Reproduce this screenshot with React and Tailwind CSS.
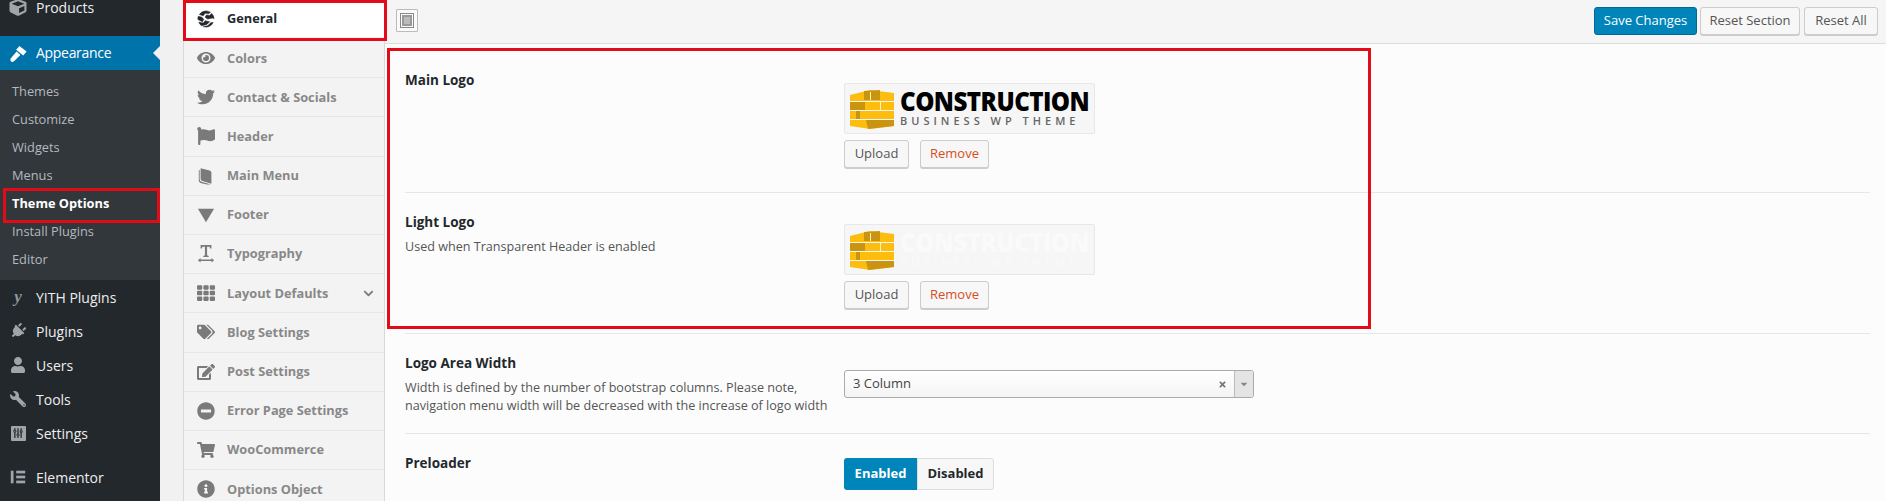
import { FaChevronDown, FaCube, FaEdit, FaEye, FaFlag, FaInfoCircle, FaMinusCircle, FaPlug, FaShoppingCart, FaTags, FaTh, FaTimes, FaTwitter, FaUser, FaWrench, FaCaretDown } from 'react-icons/fa'
import { FaSliders } from 'react-icons/fa6'

const FONT = 'font-["Open_Sans","Noto_Sans",sans-serif]'

function ElementorIcon({ className }) {
  return (
    <svg viewBox="0 0 20 20" className={className} fill="currentColor">
      <rect x="2" y="3" width="3" height="14" />
      <rect x="8" y="3" width="10" height="3" />
      <rect x="8" y="8.5" width="10" height="3" />
      <rect x="8" y="14" width="10" height="3" />
    </svg>
  )
}

function BrushIcon({ className }) {
  return (
    <svg viewBox="0 0 20 20" className={className} fill="currentColor">
      <path d="M11 2 L18.5 8 L15 12 L7.5 6 Z" />
      <path d="M8 8 L12 11.5 L5 18.5 Q3 19.5 1.8 18 Q1 16.5 2 15 Z" />
    </svg>
  )
}

function GlobeIcon({ className }) {
  return (
    <svg viewBox="0 0 20 20" className={className} fill="currentColor" stroke="currentColor" strokeWidth="0.6">
      <path d="M10 1 A9 9 0 0 0 2.6 5 L7 6.5 L9 3.5 L13 4 L15 2.6 A9 9 0 0 0 10 1 Z" />
      <path d="M16.3 3.8 L14 6 L10.5 5.5 L9 8 L12 10 L17 9 L19 9.5 A9 9 0 0 0 16.3 3.8 Z" />
      <path d="M1.4 7 A9 9 0 0 0 1 10.5 L6 13 L7.5 10.5 L5.5 8 Z" />
      <path d="M2 13.5 A9 9 0 0 0 5 17.5 L11 16 L14 13 L9 12 L7 14.5 Z" />
      <path d="M7 18.5 A9 9 0 0 0 18 14 L15.5 14 L12 17.5 Z" />
    </svg>
  )
}

function BookIcon({ className }) {
  return (
    <svg viewBox="0 0 20 20" className={className} fill="currentColor">
      <path d="M4 1.5 L14 4 Q16 4.5 16 6.5 V18.5 L6 15.5 Q4 15 4 13 Z" />
      <path d="M3 3 V14 Q3 16 5 16.5 L15.5 19.5 H11 L4 17.8 Q2 17 2 15 V4 Z" />
    </svg>
  )
}

function TriangleIcon({ className }) {
  return (
    <svg viewBox="0 0 20 20" className={className} fill="currentColor">
      <path d="M1 3 H19 L10 18 Z" />
    </svg>
  )
}

function TypographyIcon({ className }) {
  return (
    <svg viewBox="0 0 20 20" className={className} fill="currentColor">
      <path d="M4 0 H16 V4 H14.5 L14 2 H11.2 V11.5 L13 12.2 V13.2 H7 V12.2 L8.8 11.5 V2 H6 L5.5 4 H4 Z" />
      <path d="M1 17 L4 14.5 V16.2 H16 V14.5 L19 17 L16 19.5 V17.8 H4 V19.5 Z" />
    </svg>
  )
}

function Bricks() {
  return (
    <svg viewBox="0 0 44 40" className="w-[44px] h-[40px] shrink-0">
      <path d="M0 6 L20 1 L44 4 V12 H0 Z" fill="#fdbd0e" />
      <path d="M14 2 L30 1 V11 H14 Z" fill="#c9940f" />
      <path d="M0 13 H44 V21 H0 Z" fill="#fdbd0e" />
      <path d="M0 13 H15 V21 H0 Z" fill="#c9940f" />
      <path d="M30 13 H31 V21 H30 Z M20 3 H21 V11 H20 Z" fill="#fff3c9" />
      <path d="M0 22 H44 V30 H0 Z" fill="#fdbd0e" />
      <path d="M6 22 H10 V30 H6 Z" fill="#c9940f" />
      <path d="M0 31 H44 V37 L20 40 L0 37 Z" fill="#fdbd0e" />
      <path d="M16 31 H44 V37 L18 40 Z" fill="#c9940f" />
    </svg>
  )
}

function LogoPreview({ light }) {
  return (
    <div className="w-[251px] h-[51px] bg-[#f6f6f6] border border-[#e8e8e8] rounded-[2px] flex items-center gap-[6px] pl-[5px] overflow-hidden">
      <Bricks />
      <div className="flex flex-col -mt-[2px] font-['Open_Sans',sans-serif]">
        <span className={`text-[26px] leading-[26px] font-extrabold tracking-[-0.6px] scale-x-[0.93] origin-left ${light ? 'text-[#fafafa]' : 'text-black'}`}>CONSTRUCTION</span>
        <span className={`text-[11px] leading-[13px] font-semibold tracking-[4px] ${light ? 'text-[#f9f9f9]' : 'text-[#666]'}`}>BUSINESS WP THEME</span>
      </div>
    </div>
  )
}

function WpButton({ children, className = '' }) {
  return (
    <button className={`h-[28px] bg-[#f7f7f7] border border-[#cccccc] rounded-[3px] shadow-[0_1px_0_#cccccc] text-[13px] ${className}`}>
      {children}
    </button>
  )
}

const wpMain = [
  { label: 'YITH Plugins', glyph: true },
  { label: 'Plugins', icon: FaPlug, rotate: 'rotate-45' },
  { label: 'Users', icon: FaUser },
  { label: 'Tools', icon: FaWrench, rotate: '-rotate-90' },
]

const subItems = ['Themes', 'Customize', 'Widgets', 'Menus', 'Theme Options', 'Install Plugins', 'Editor']

const panelItems = [
  { label: 'Colors', icon: FaEye },
  { label: 'Contact & Socials', icon: FaTwitter },
  { label: 'Header', icon: FaFlag },
  { label: 'Main Menu', icon: BookIcon },
  { label: 'Footer', icon: TriangleIcon },
  { label: 'Typography', icon: TypographyIcon },
  { label: 'Layout Defaults', icon: FaTh, more: true },
  { label: 'Blog Settings', icon: FaTags },
  { label: 'Post Settings', icon: FaEdit },
  { label: 'Error Page Settings', icon: FaMinusCircle },
  { label: 'WooCommerce', icon: FaShoppingCart },
  { label: 'Options Object', icon: FaInfoCircle },
]

function Sidebar() {
  return (
    <aside className="w-[160px] shrink-0 bg-[#23282d] text-[14px] text-[#eeeeee]">
      <div className="h-[35px] -mt-[3px] pb-[14px] flex items-center">
        <FaCube className="w-[36px] text-[17px] text-[#a0a5aa]" />
        <span>Products</span>
      </div>
      <div className="h-[34px] mt-[4px] bg-[#0073aa] text-white flex items-center relative">
        <span className="w-[36px] flex justify-center">
          <BrushIcon className="w-[19px] h-[19px]" />
        </span>
        <span className="tracking-[-0.3px] -mt-[2px]">Appearance</span>
        <span className="absolute right-0 top-[10px] border-y-[7px] border-r-[7px] border-y-transparent border-r-[#f1f1f1]" />
      </div>
      <ul className="bg-[#32373c] pt-[8px] pb-[6px] text-[12.8px] text-[#b4b9be]">
        {subItems.map((item) => (
          <li key={item} className={`h-[28px] pl-[12px] flex items-center ${item === 'Theme Options' ? 'text-white font-bold' : ''}`}>
            {item}
          </li>
        ))}
      </ul>
      {wpMain.map((item) => (
        <div key={item.label} className="h-[34px] flex items-center">
          {item.glyph ? (
            <span className="w-[36px] text-center text-[17px] font-['Liberation_Serif',serif] font-bold italic text-[#8f959a]">y</span>
          ) : (
            <span className="w-[36px] flex justify-center">
              <item.icon className={`text-[16px] text-[#a0a5aa] ${item.rotate || ''}`} />
            </span>
          )}
          <span>{item.label}</span>
        </div>
      ))}
      <div className="h-[34px] flex items-center">
        <span className="w-[36px] flex justify-center">
          <span className="w-[15px] h-[15px] bg-[#a0a5aa] rounded-[1px] flex items-center justify-center">
            <FaSliders className="text-[10px] text-[#23282d] rotate-90" />
          </span>
        </span>
        <span>Settings</span>
      </div>
      <div className="h-[34px] mt-[10px] flex items-center">
        <span className="w-[36px] flex justify-center">
          <ElementorIcon className="w-[18px] h-[18px] text-[#a0a5aa]" />
        </span>
        <span>Elementor</span>
      </div>
    </aside>
  )
}

function OptionsMenu() {
  return (
    <nav className="w-[202px] shrink-0 bg-[#f3f3f3] border-l border-r border-[#d8d8d8] text-[12.8px] font-bold text-[#888888]">
      <div className="h-[37px] mb-[2px] bg-white text-[#23282d] flex items-center pl-[13px]">
        <GlobeIcon className="w-[18px] h-[18px] text-[#23282d] mr-[12px]" />
        General
      </div>
      {panelItems.map((item) => (
        <div key={item.label} className="h-[39.2px] border-b border-[#e7e7e7] flex items-center pl-[13px] pr-[10px]">
          <item.icon className="w-[18px] h-[18px] text-[#7a7a7a] mr-[12px] shrink-0" />
          <span className="flex-1">{item.label}</span>
          {item.more && <FaChevronDown className="text-[11px] text-[#7a7a7a]" />}
        </div>
      ))}
    </nav>
  )
}

function Field({ title, desc, h, children }) {
  return (
    <div className={`${h} border-b border-[#e7e7e7] flex`}>
      <div className="w-[439px] shrink-0">
        <h3 className="text-[13.5px] font-bold text-[#23282d]">{title}</h3>
        {desc && <p className="mt-[6px] text-[12.6px] leading-[18px] text-[#555555]">{desc}</p>}
      </div>
      <div>{children}</div>
    </div>
  )
}

function LogoField({ title, desc, light }) {
  return (
    <Field title={title} desc={desc} h={light ? 'h-[141px] pt-[19px]' : 'h-[141px] pt-[18px]'}>
      <div className={light ? 'mt-[12px]' : 'mt-[13px]'}>
        <LogoPreview light={light} />
      </div>
      <div className="flex gap-[11px] mt-[6px]">
        <WpButton className="w-[65px] text-[#555555]">Upload</WpButton>
        <WpButton className="w-[69px] text-[#d54e21]">Remove</WpButton>
      </div>
    </Field>
  )
}

export default function App() {
  return (
    <div className={`h-[501px] w-[1886px] overflow-hidden flex relative bg-[#fcfcfc] ${FONT}`}>
      <Sidebar />
      <div className="w-[23px] shrink-0 bg-[#f1f1f1]" />
      <OptionsMenu />
      <main className="flex-1 min-w-0 bg-[#fcfcfc]">
        <header className="h-[44px] bg-[#f5f5f5] border-b border-[#dedede] flex items-center pl-[11px] pr-[8px] pb-[2px]">
          <span className="w-[22px] h-[23px] bg-[#fafafa] border border-[#bbbbbb] rounded-[1px] flex items-center justify-center">
            <span className="w-[14px] h-[15px] border border-[#888] p-[1px] flex">
              <span className="flex-1 border-2 border-[#999] bg-[#bbb]" />
            </span>
          </span>
          <div className="ml-auto flex text-[13px]">
            <button className="h-[28px] w-[103px] bg-[#0085ba] border border-[#006799] rounded-[3px] text-white">Save Changes</button>
            <WpButton className="w-[100px] ml-[3px] text-[#555555]">Reset Section</WpButton>
            <WpButton className="w-[74px] ml-[4px] text-[#555555]">Reset All</WpButton>
          </div>
        </header>
        <div className="pl-[20px] pr-[16px] pt-[8px]">
          <LogoField title="Main Logo" />
          <LogoField title="Light Logo" desc="Used when Transparent Header is enabled" light />
          <Field
            title="Logo Area Width"
            desc={<>Width is defined by the number of bootstrap columns. Please note,<br />navigation menu width will be decreased with the increase of logo width</>}
            h="h-[100px] pt-[19px]"
          >
            <div className="mt-[17px] w-[410px] h-[28px] bg-gradient-to-b from-white to-[#f4f4f4] border border-[#aaaaaa] rounded-[3px] flex items-center pl-[8px] text-[13px] text-[#444444]">
              <span className="flex-1">3 Column</span>
              <FaTimes className="text-[9px] text-[#777] mr-[7px]" />
              <span className="w-[19px] h-full bg-[#e4e4e4] border-l border-[#bbbbbb] flex items-center justify-center rounded-r-[3px]">
                <FaCaretDown className="text-[10px] text-[#888]" />
              </span>
            </div>
          </Field>
          <div className="flex pt-[19px]">
            <h3 className="w-[439px] shrink-0 text-[13.5px] font-bold text-[#23282d]">Preloader</h3>
            <div className="mt-[5px] flex h-[32px] text-[13px] font-bold">
              <span className="w-[73px] bg-[#0085ba] text-white rounded-l-[3px] flex items-center justify-center">Enabled</span>
              <span className="w-[77px] bg-[#f7f7f7] border border-[#dddddd] rounded-r-[3px] text-[#23282d] flex items-center justify-center">Disabled</span>
            </div>
          </div>
        </div>
      </main>
      <span className="absolute left-[3px] top-[188px] w-[157px] h-[35px] border-[3px] border-[#e10c17]" />
      <span className="absolute left-[183px] top-0 w-[204px] h-[41px] border-[3px] border-[#e10c17]" />
      <span className="absolute left-[387px] top-[48px] w-[984px] h-[281px] border-[3px] border-[#e10c17]" />
    </div>
  )
}
